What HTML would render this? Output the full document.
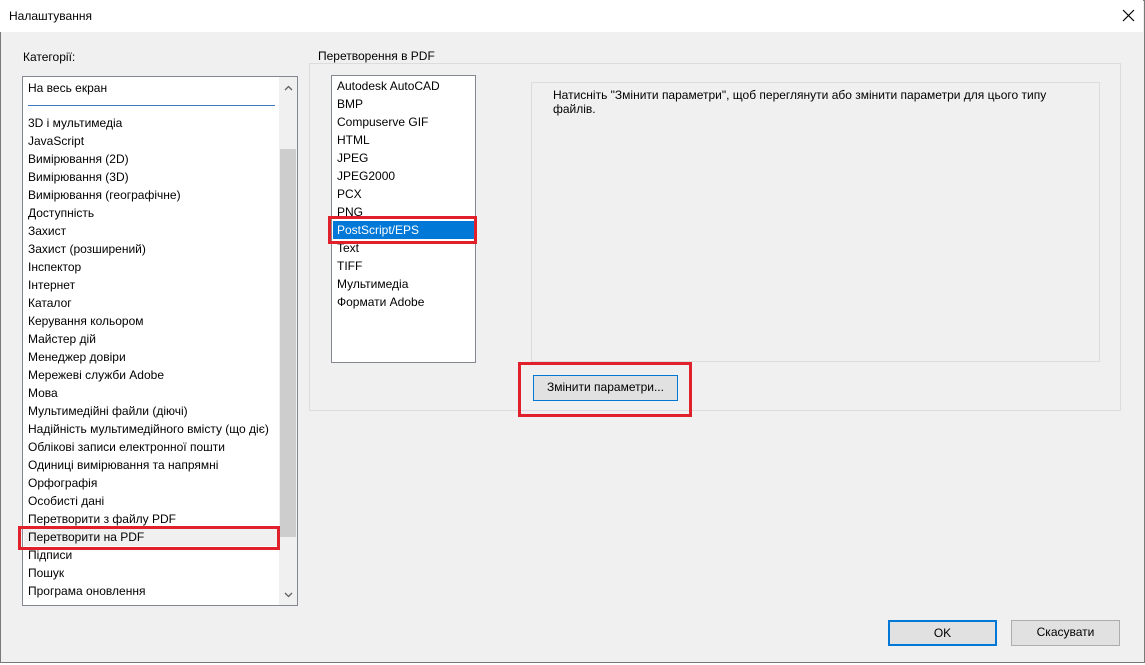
<!DOCTYPE html>
<html><head><meta charset="utf-8"><style>
*{box-sizing:border-box;margin:0;padding:0}
body{width:1145px;height:665px;background:#fff;font-family:"Liberation Sans",sans-serif;font-size:12px;color:#000;position:relative;overflow:hidden}
.abs{position:absolute}
.dlg{left:0;top:0;width:1145px;height:663px;background:#f0f0f0;border:1px solid #7a7a7a}
.title{left:0;top:0;width:1143px;height:32px;background:#fff}
.list{background:#fff;border:1px solid #828790}
.it{position:absolute;left:5px;height:18px;line-height:18px;white-space:nowrap}
.btn{background:#e1e1e1;border:1px solid #adadad;text-align:center;line-height:23px}
.red{border:3px solid #e0202a}
</style></head><body>
<div class="abs dlg"></div>
<div class="abs title"></div>
<div class="abs" style="left:9px;top:9px;font-size:12px">Налаштування</div>
<svg class="abs" style="left:1122px;top:9px" width="13" height="13"><path d="M1 1L12 12M12 1L1 12" stroke="#000" stroke-width="1.2"/></svg>
<div class="abs" style="left:23px;top:50px">Категорії:</div>
<div class="abs list" style="left:22px;top:76px;width:276px;height:530px;overflow:hidden">
<div class="abs" style="left:5px;top:28px;width:247px;height:1px;background:#3a7ab8"></div>
<div class="abs" style="left:256px;top:0;width:18px;height:528px;background:#f0f0f0"></div>
<div class="abs" style="left:257px;top:72px;width:16px;height:388px;background:#cdcdcd"></div>
<svg class="abs" style="left:261px;top:8px" width="9" height="6"><path d="M1 5L4.5 1.5L8 5" stroke="#606060" stroke-width="1.3" fill="none"/></svg>
<svg class="abs" style="left:261px;top:515px" width="9" height="6"><path d="M1 1L4.5 4.5L8 1" stroke="#606060" stroke-width="1.3" fill="none"/></svg>
<div class="it" style="top:2px">На весь екран</div>
<div class="it" style="top:37px">3D і мультимедіа</div>
<div class="it" style="top:55px">JavaScript</div>
<div class="it" style="top:73px">Вимірювання (2D)</div>
<div class="it" style="top:91px">Вимірювання (3D)</div>
<div class="it" style="top:109px">Вимірювання (географічне)</div>
<div class="it" style="top:127px">Доступність</div>
<div class="it" style="top:145px">Захист</div>
<div class="it" style="top:163px">Захист (розширений)</div>
<div class="it" style="top:181px">Інспектор</div>
<div class="it" style="top:199px">Інтернет</div>
<div class="it" style="top:217px">Каталог</div>
<div class="it" style="top:235px">Керування кольором</div>
<div class="it" style="top:253px">Майстер дій</div>
<div class="it" style="top:271px">Менеджер довіри</div>
<div class="it" style="top:289px">Мережеві служби Adobe</div>
<div class="it" style="top:307px">Мова</div>
<div class="it" style="top:325px">Мультимедійні файли (діючі)</div>
<div class="it" style="top:343px">Надійність мультимедійного вмісту (що діє)</div>
<div class="it" style="top:361px">Облікові записи електронної пошти</div>
<div class="it" style="top:379px">Одиниці вимірювання та напрямні</div>
<div class="it" style="top:397px">Орфографія</div>
<div class="it" style="top:415px">Особисті дані</div>
<div class="it" style="top:433px">Перетворити з файлу PDF</div>
<div class="it" style="top:451px;left:1px;width:254px;padding-left:4px;background:#f0f0f0">Перетворити на PDF</div>
<div class="it" style="top:469px">Підписи</div>
<div class="it" style="top:487px">Пошук</div>
<div class="it" style="top:505px">Програма оновлення</div>
</div>
<div class="abs red" style="left:18px;top:526px;width:262px;height:24px"></div>

<div class="abs" style="left:309px;top:63px;width:812px;height:348px;border:1px solid #dcdcdc"></div>
<div class="abs" style="left:315px;top:49px;background:#f0f0f0;padding:0 3px">Перетворення в PDF</div>
<div class="abs list" style="left:331px;top:75px;width:145px;height:288px">
<div class="it" style="top:1px">Autodesk AutoCAD</div>
<div class="it" style="top:19px">BMP</div>
<div class="it" style="top:37px">Compuserve GIF</div>
<div class="it" style="top:55px">HTML</div>
<div class="it" style="top:73px">JPEG</div>
<div class="it" style="top:91px">JPEG2000</div>
<div class="it" style="top:109px">PCX</div>
<div class="it" style="top:127px">PNG</div>
<div class="it" style="top:145px;left:1px;width:141px;padding-left:4px;background:#0078d7;color:#fff">PostScript/EPS</div>
<div class="it" style="top:163px">Text</div>
<div class="it" style="top:181px">TIFF</div>
<div class="it" style="top:199px">Мультимедіа</div>
<div class="it" style="top:217px">Формати Adobe</div>
</div>
<div class="abs red" style="left:328px;top:216px;width:149px;height:28px"></div>
<div class="abs" style="left:531px;top:82px;width:569px;height:280px;border:1px solid #dcdcdc"></div>
<div class="abs" style="left:553px;top:88px;width:520px;line-height:14px">Натисніть "Змінити параметри", щоб переглянути або змінити параметри для цього типу файлів.</div>
<div class="abs btn" style="left:533px;top:375px;width:145px;height:26px;border:1px solid #0078d7">Змінити параметри...</div>
<div class="abs red" style="left:518px;top:362px;width:174px;height:55px"></div>

<div class="abs btn" style="left:888px;top:620px;width:109px;height:26px;border:2px solid #0078d7;line-height:22px">OK</div>
<div class="abs btn" style="left:1011px;top:620px;width:109px;height:26px">Скасувати</div>
</body></html>
